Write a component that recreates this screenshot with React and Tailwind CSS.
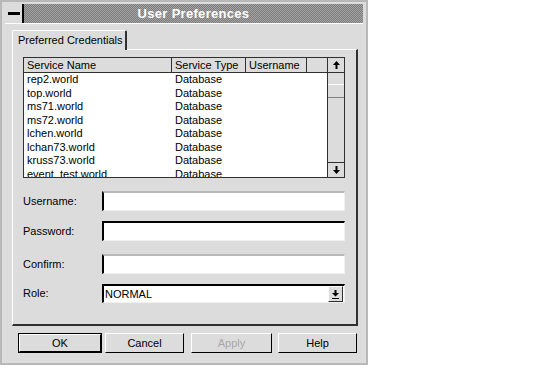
import React from "react";

const rows = [
  "rep2.world",
  "top.world",
  "ms71.world",
  "ms72.world",
  "lchen.world",
  "lchan73.world",
  "kruss73.world",
  "event_test.world",
];

function Btn({ children, def, disabled }) {
  return (
    <div className={"h-[20px] " + (def ? "border border-black" : "")}>
      <div
        className={
          "h-full flex items-center justify-center border-t border-l border-white border-r border-b border-r-black border-b-black bg-[#dcdcdc] " +
          (disabled ? "text-[#a8a8a8]" : "text-black")
        }
      >
        {children}
      </div>
    </div>
  );
}

function Field({ label, top, mt }) {
  return (
    <div className={"flex items-center " + mt}>
      <div className="w-[79px]">{label}</div>
      <div
        className={
          "w-[243px] h-[20px] bg-white border-l-2 border-l-black border-r border-b border-r-[#f0f0f0] border-b-[#f0f0f0] " +
          (top ? "border-t-2 border-t-black" : "border-t-2 border-t-[#b8b8b8]")
        }
      ></div>
    </div>
  );
}

export default function App() {
  return (
    <div
      className="w-[536px] h-[368px] bg-white text-[11px] leading-none text-black"
      style={{ fontFamily: '"Liberation Sans", Arial, sans-serif' }}
    >
      <div className="w-[368px] h-[365px] border-2 border-[#b8b8b8] bg-[#dcdcdc] flex flex-col px-[3px] pt-[2px]">
        {/* title bar */}
        <div className="flex h-[19px]">
          <div className="w-[19px] h-full flex items-center justify-center border-r-2 border-black">
            <div className="w-[12px] h-[3px] bg-black"></div>
          </div>
          <div className="flex-1 h-full flex items-center justify-center bg-[repeating-conic-gradient(#7c7c7c_0_25%,#a4a4a4_0_50%)] bg-[length:2px_2px]">
            <span className="text-white font-bold text-[13px] tracking-[0.3px]">User Preferences</span>
          </div>
        </div>
        <div className="h-px bg-white"></div>

        {/* tab */}
        <div className="ml-[7px] mt-[6px] relative z-10 -mb-px w-[115px] h-[20px] bg-[#dcdcdc] border-l border-t border-white border-r-2 border-r-[#303030] rounded-tl-[2px] rounded-tr-[2px] flex items-center pl-[5px]">
          Preferred Credentials
        </div>

        {/* panel */}
        <div className="ml-[7px] w-[346px] h-[277px] border-l border-t border-white border-r-2 border-b-2 border-r-[#303030] border-b-[#303030] pl-[10px] pt-[7px] flex flex-col">
          {/* table */}
          <div className="w-[322px] h-[121px] border border-[#303030] flex overflow-hidden">
            <div className="flex-1 flex flex-col bg-white">
              <div className="flex h-[15px] bg-[#dcdcdc] border-b border-[#303030] shrink-0">
                <div className="w-[148px] border-r border-[#303030] pl-[3px] flex items-center">Service Name</div>
                <div className="w-[74px] border-r border-[#303030] pl-[3px] flex items-center">Service Type</div>
                <div className="w-[61px] border-r border-[#303030] pl-[3px] flex items-center">Username</div>
                <div className="flex-1"></div>
              </div>
              {rows.map((r) => (
                <div key={r} className="flex h-[13.5px] items-center shrink-0">
                  <div className="w-[148px] pl-[3px]">{r}</div>
                  <div className="w-[74px] pl-[3px]">Database</div>
                </div>
              ))}
            </div>
            {/* scrollbar */}
            <div className="w-[17px] border-l border-[#303030] bg-[#dcdcdc] flex flex-col">
              <div className="h-[15px] border-b border-[#303030] flex items-center justify-center bg-[#dcdcdc]">
                <svg width="7" height="8" viewBox="0 0 7 8">
                  <path d="M3.5 0 L7 4 L4.5 4 L4.5 8 L2.5 8 L2.5 4 L0 4 Z" fill="black" />
                </svg>
              </div>
              <div className="h-[11px]"></div>
              <div className="h-[14px] border-t border-b border-[#808080] bg-[#dcdcdc] border-t-white"></div>
              <div className="flex-1"></div>
              <div className="h-[15px] border-t border-[#303030] flex items-center justify-center">
                <svg width="7" height="8" viewBox="0 0 7 8">
                  <path d="M3.5 8 L7 4 L4.5 4 L4.5 0 L2.5 0 L2.5 4 L0 4 Z" fill="black" />
                </svg>
              </div>
            </div>
          </div>

          {/* form */}
          <Field label="Username:" mt="mt-[13px]" />
          <Field label="Password:" top mt="mt-[10px]" />
          <Field label="Confirm:" mt="mt-[13px]" />
          <div className="flex items-center mt-[10px]">
            <div className="w-[79px]">Role:</div>
            <div className="w-[243px] h-[19px] bg-white border-l-2 border-t-2 border-black border-r border-b border-r-[#f0f0f0] border-b-[#f0f0f0] flex items-center">
              <div className="flex-1 pl-[1px]">NORMAL</div>
              <div className="w-[15px] h-[16px] mr-[1px] bg-[#dcdcdc] border-t border-l border-white border-r border-b border-r-[#303030] border-b-[#303030] flex items-center justify-center">
                <svg width="7" height="9" viewBox="0 0 7 9">
                  <path d="M3.5 6.5 L7 3 L4.5 3 L4.5 0 L2.5 0 L2.5 3 L0 3 Z" fill="black" />
                  <rect x="0" y="8" width="7" height="1" fill="black" />
                </svg>
              </div>
            </div>
          </div>
        </div>

        {/* buttons */}
        <div className="flex mt-[7px] ml-[13px]">
          <div className="w-[84px]"><Btn def>OK</Btn></div>
          <div className="w-[79px] ml-[3px]"><Btn>Cancel</Btn></div>
          <div className="w-[81px] ml-[7px]"><Btn disabled>Apply</Btn></div>
          <div className="w-[79px] ml-[6px]"><Btn>Help</Btn></div>
        </div>
      </div>
    </div>
  );
}
